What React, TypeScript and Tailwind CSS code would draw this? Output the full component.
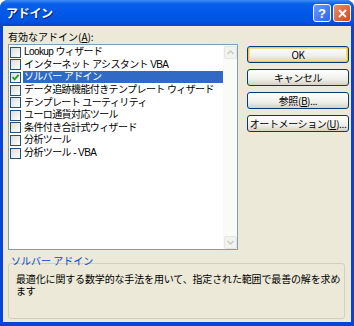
import React from 'react';

const items = [
  { label: 'Lookup ウィザード', checked: false },
  { label: 'インターネット アシスタント VBA', checked: false },
  { label: 'ソルバー アドイン', checked: true, selected: true },
  { label: 'データ追跡機能付きテンプレート ウィザード', checked: false },
  { label: 'テンプレート ユーティリティ', checked: false },
  { label: 'ユーロ通貨対応ツール', checked: false },
  { label: '条件付き合計式ウィザード', checked: false },
  { label: '分析ツール', checked: false },
  { label: '分析ツール - VBA', checked: false },
];

const font = "font-['Noto_Sans_CJK_JP','Noto_Sans_CJK_SC',sans-serif]";

const CheckBox = ({ checked }: { checked: boolean }) => (
  <span className="w-[11px] h-[11px] shrink-0 border border-[#1C5180] bg-[linear-gradient(135deg,#DCDCD7,#FFFFFF)] flex items-center justify-center">
    {checked && (
      <svg width="9" height="9" viewBox="0 0 9 9">
        <path d="M1.5 4.2 L3.6 6.4 L7.6 1.8" stroke="#21A121" strokeWidth="1.8" fill="none" />
      </svg>
    )}
  </span>
);

const Button = ({ children, primary }: { children: React.ReactNode; primary?: boolean }) => (
  <button
    className={`h-[17px] w-[102px] rounded-[3px] border border-[#003C74] bg-[linear-gradient(to_bottom,#FFFFFF,#F0F0EA_60%,#D6D0C5)] text-[10px] leading-none text-black whitespace-nowrap tracking-[-0.4px] flex items-center justify-center ${
      primary ? 'shadow-[inset_0_0_0_1px_#F5C24B,inset_0_0_0_2px_#FBDB8E]' : ''
    }`}
  >
    {children}
  </button>
);

const ScrollArrow = ({ up }: { up?: boolean }) => (
  <div className="h-[13px] w-[13px] rounded-[2px] bg-[#F3F3EE] border border-[#E6E6DF] flex items-center justify-center">
    <svg width="7" height="5" viewBox="0 0 7 5">
      <path d={up ? 'M0.5 4 L3.5 1 L6.5 4' : 'M0.5 1 L3.5 4 L6.5 1'} stroke="#C9C7BA" strokeWidth="1.3" fill="none" />
    </svg>
  </div>
);

export default function App() {
  return (
    <div className={`w-[354px] h-[326px] flex flex-col bg-[#0842D6] rounded-t-[8px] overflow-hidden ${font}`}>
      {/* title bar */}
      <div className="h-[26px] shrink-0 flex items-center justify-between pl-[6px] pr-[3px] bg-[linear-gradient(to_bottom,#3D8DF5_0%,#0A5FEA_15%,#0058E8_50%,#0052E0_85%,#0246C4_100%)]">
        <span className="text-white text-[12px] font-bold tracking-tight [text-shadow:1px_1px_0_#0A1E6E]">アドイン</span>
        <div className="flex gap-[2px]">
          <div className="w-[18px] h-[18px] rounded-[3px] border border-white bg-[linear-gradient(135deg,#6A9BFF,#2B64F0)] flex items-center justify-center text-white font-bold text-[13px] leading-none font-['Liberation_Sans',sans-serif]">
            ?
          </div>
          <div className="w-[18px] h-[18px] rounded-[3px] border border-white bg-[linear-gradient(135deg,#EC8A6B,#D24A1E)] flex items-center justify-center">
            <svg width="9" height="9" viewBox="0 0 9 9">
              <path d="M1 1 L8 8 M8 1 L1 8" stroke="white" strokeWidth="1.8" />
            </svg>
          </div>
        </div>
      </div>

      {/* body */}
      <div className="flex-1 mx-[3px] mb-[4px] bg-[#ECE9D8] flex flex-col pl-[5px] pr-[2px] pt-[4px] text-black">
        <div className="text-[10px] leading-[13px] h-[14px]">
          有効なアドイン(<span className="underline">A</span>):
        </div>
        <div className="flex gap-[9px]">
          {/* list box */}
          <div className="w-[230px] h-[206px] border border-[#7F9DB9] bg-white flex">
            <div className="flex-1 pt-[1px] pl-[1px]">
              {items.map((it) => (
                <div key={it.label} className="h-[12.6px] flex items-center gap-[2px]">
                  <CheckBox checked={it.checked} />
                  <span
                    className={`h-[12px] overflow-hidden text-[10px] leading-[12px] px-[1px] whitespace-nowrap tracking-[-0.6px] font-['Liberation_Sans','Noto_Sans_CJK_JP',sans-serif] ${
                      it.selected ? 'bg-[#316AC5] text-white flex-1' : ''
                    }`}
                  >
                    {it.label}
                  </span>
                </div>
              ))}
            </div>
            <div className="w-[14px] bg-[#FAFAF7] flex flex-col justify-between p-[0.5px]">
              <ScrollArrow up />
              <ScrollArrow />
            </div>
          </div>
          {/* buttons */}
          <div className="flex flex-col gap-[6px] pt-[2px]">
            <Button primary>OK</Button>
            <Button>キャンセル</Button>
            <Button>
              参照(<span className="underline">B</span>)...
            </Button>
            <Button>
              オートメーション(<span className="underline">U</span>)...
            </Button>
          </div>
        </div>

        {/* description group */}
        <div className="mt-[5px] mr-[4px]">
          <div className="text-[10px] leading-[12px] text-[#0046D5] pl-[3px]">ソルバー アドイン</div>
          <div className="-mt-[4px] h-[56px] border border-[#D0D0BF] rounded-[3px] pl-[7px] pt-[9px]">
            <p className="w-[326px] text-[10px] leading-[12px] tracking-[-0.15px]">
              最適化に関する数学的な手法を用いて、指定された範囲で最善の解を求めます
            </p>
          </div>
        </div>
      </div>
    </div>
  );
}
